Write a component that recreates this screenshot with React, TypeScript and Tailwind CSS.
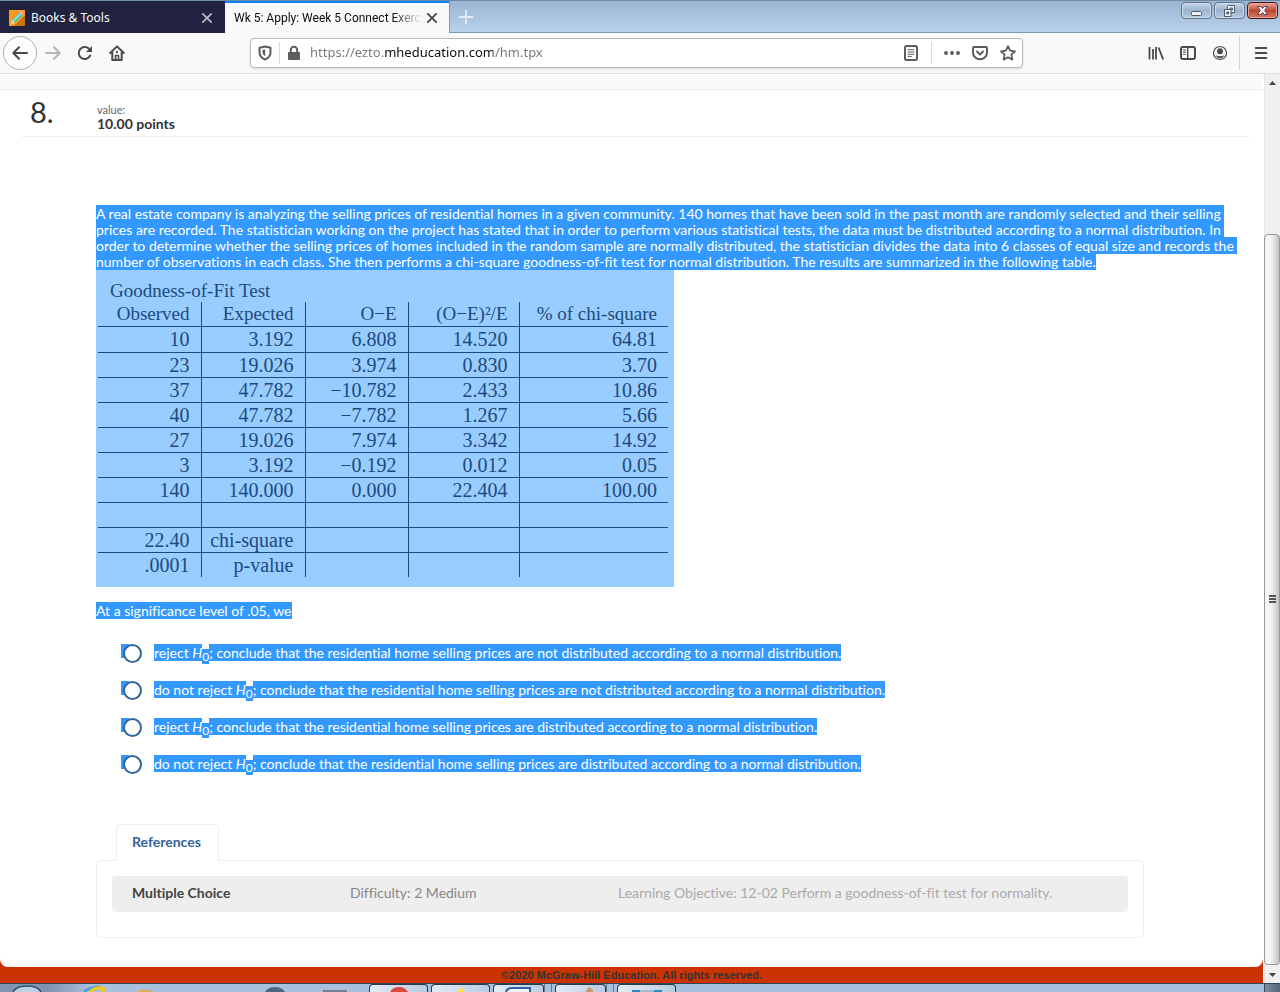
import type { ReactNode } from "react";

const rows: string[][] = [
  ["10", "3.192", "6.808", "14.520", "64.81"],
  ["23", "19.026", "3.974", "0.830", "3.70"],
  ["37", "47.782", "−10.782", "2.433", "10.86"],
  ["40", "47.782", "−7.782", "1.267", "5.66"],
  ["27", "19.026", "7.974", "3.342", "14.92"],
  ["3", "3.192", "−0.192", "0.012", "0.05"],
  ["140", "140.000", "0.000", "22.404", "100.00"],
  ["", "", "", "", ""],
  ["22.40", "chi-square", "", "", ""],
  [".0001", "p-value", "", "", ""],
];

const options = [
  { lead: "reject ", tail: "; conclude that the residential home selling prices are not distributed according to a normal distribution." },
  { lead: "do not reject ", tail: "; conclude that the residential home selling prices are not distributed according to a normal distribution." },
  { lead: "reject ", tail: "; conclude that the residential home selling prices are distributed according to a normal distribution." },
  { lead: "do not reject ", tail: "; conclude that the residential home selling prices are distributed according to a normal distribution." },
];

function Icon({ children, size = 16 }: { children: ReactNode; size?: number }) {
  return (
    <svg width={size} height={size} viewBox="0 0 16 16" fill="none" stroke="currentColor" strokeWidth="2" strokeLinecap="round" strokeLinejoin="round" aria-hidden="true">
      {children}
    </svg>
  );
}

function CloseIcon() {
  return (
    <Icon>
      <path d="M3.8 3.8l8.4 8.4M12.2 3.8l-8.4 8.4" strokeWidth="1.7" />
    </Icon>
  );
}

function TitleBar() {
  return (
    <header className="flex h-[33px] shrink-0 border-t border-b border-t-[#6f8ca5] border-b-[#7f9ab4] bg-gradient-to-b from-[#9bb5d2] to-[#b9d1ea]">
      <div className="-mb-px flex w-[225px] items-center bg-[#20223f] pt-px pr-[10px] pl-[9px] text-[#f9f9fa]">
        <svg width="16" height="16" viewBox="0 0 16 16" aria-hidden="true">
          <rect width="16" height="16" fill="#fb9a1c" />
          <path d="M16 5v11H5z" fill="#c87307" />
          <path d="M3 10l7.5-7.5 3 3L6 13z" fill="#4fc5b0" />
          <path d="M4.2 11.2l7.5-7.5" stroke="#a5eadb" strokeWidth="1.2" />
          <path d="M10.5 2.5l1-1q1-.6 2 .4t.5 2.100l-1 1z" fill="#ec9ad0" />
          <path d="M3 10l3 3-4 1.200z" fill="#f8dca7" />
        </svg>
        <span className="ml-[6px] flex-1 text-[12px]">Books &amp; Tools</span>
        <button type="button" aria-label="Close Books & Tools" className="text-[#b9bac6]">
          <CloseIcon />
        </button>
      </div>
      <div className="-mb-px flex w-[224px] items-center border-t-2 border-[#0a84ff] bg-[#f9f9fa] pr-[9px] pl-[9px] text-[#0c0c0d]">
        <span className="w-[187px] overflow-hidden font-[Roboto,sans-serif] text-[12px] whitespace-nowrap [mask-image:linear-gradient(90deg,#000_158px,transparent_188px)]">
          Wk 5: Apply: Week 5 Connect Exercise
        </span>
        <button type="button" aria-label="Close Wk 5" className="ml-[3px] text-[#3f3f41]">
          <CloseIcon />
        </button>
      </div>
      <button type="button" aria-label="New tab" className="flex w-8 items-center justify-center border-l border-[#7f9ab4] text-[#e4edf6]">
        <Icon>
          <path d="M8 1.500v13M1.500 8h13" strokeWidth="1.800" />
        </Icon>
      </button>
      <div className="flex-1" />
      <div className="mt-px mr-[2px] flex h-[17px] gap-[2px]">
        <button type="button" aria-label="Minimize" className="flex w-[31px] items-center justify-center rounded-sm border border-[#5e738b] bg-gradient-to-b from-[#c3d5e8] via-[#9cb5cf] to-[#b3cbe3] shadow-[inset_0_0_0_1px_#d2e0ee]">
          <svg width="13" height="12" viewBox="0 0 13 12" aria-hidden="true">
            <rect x="1.500" y="6.500" width="10" height="4" rx="1" fill="#f2f2f2" stroke="#4b5a6b" />
          </svg>
        </button>
        <button type="button" aria-label="Restore" className="flex w-[31px] items-center justify-center rounded-sm border border-[#5e738b] bg-gradient-to-b from-[#c3d5e8] via-[#9cb5cf] to-[#b3cbe3] shadow-[inset_0_0_0_1px_#d2e0ee]">
          <svg width="13" height="12" viewBox="0 0 13 12" fill="#f2f2f2" stroke="#4b5a6b" aria-hidden="true">
            <path fillRule="evenodd" d="M4.500 1.500q0-1 1-1h6v7h-7zM7 3v2h2.500V3z" />
            <path fillRule="evenodd" d="M1.500 4.500h6.500v7h-6.500zM3.800 7v2h2V7z" />
          </svg>
        </button>
        <button type="button" aria-label="Close window" className="flex w-[31px] items-center justify-center rounded-sm border border-[#4c1220] bg-gradient-to-b from-[#e9a99d] via-[#bf4630] to-[#d37a61] shadow-[inset_0_0_0_1px_#e5a79a]">
          <svg width="13" height="11" viewBox="0 0 13 11" aria-hidden="true">
            <path d="M1.500 1.500h3.200l1.800 2 1.800-2h3.200L8.700 5.500l2.800 4H8.300l-1.800-2-1.800 2H1.500l2.800-4z" fill="#f5f5f5" stroke="#5a4558" />
          </svg>
        </button>
      </div>
    </header>
  );
}

function Toolbar() {
  return (
    <nav className="flex h-[41px] shrink-0 items-center border-b border-[#dedee0] bg-[#f9f9fa] pl-[3px] text-[#4a4a4b]">
      <button type="button" aria-label="Back" className="flex size-[34px] items-center justify-center rounded-full border border-[#b1b1b3] bg-[#fdfdfd]">
        <Icon>
          <path d="M15 8H1.500M7 2.300L1.300 8 7 13.700" />
        </Icon>
      </button>
      <button type="button" aria-label="Forward" className="ml-2 text-[#b6b6b7]">
        <Icon>
          <path d="M1 8h13.500M9 2.300L14.700 8 9 13.700" />
        </Icon>
      </button>
      <button type="button" aria-label="Reload" className="ml-4">
        <Icon>
          <path d="M13.200 10.500A6 6 0 1 1 12 3.800" />
          <path d="M15 1v6H9z" fill="currentColor" stroke="none" />
        </Icon>
      </button>
      <button type="button" aria-label="Home" className="ml-4">
        <Icon>
          <path d="M1.200 8L8 1.400 14.800 8M3.300 7.500V15h9.400V7.500" />
          <path d="M6.500 15v-4.500h3V15" strokeWidth="1.600" />
          <path d="M8 6.800v.4" />
        </Icon>
      </button>
      <div className="ml-[125px] flex h-[30px] flex-1 items-center rounded-sm border border-[#b9b9bb] bg-white pr-[6px] pl-[6px] text-[#5d5d5e] shadow-sm">
        <Icon>
          <path d="M8 1.500l5.500 1.300v4.400c0 3.600-2 6-5.500 7.300-3.500-1.300-5.500-3.700-5.500-7.300V2.800z" />
          <path d="M8.200 4.500v6.700C6.300 10 5.500 8.700 5.500 7V5z" fill="currentColor" stroke="none" />
        </Icon>
        <span className="mx-[6px] h-[22px] w-px bg-[#d7d7db]" />
        <svg width="16" height="16" viewBox="0 0 16 16" aria-hidden="true">
          <rect x="2" y="7" width="12" height="8" rx="1" fill="currentColor" />
          <path d="M4.800 8V5a3.200 3.200 0 0 1 6.400 0v3" fill="none" stroke="currentColor" strokeWidth="2" />
        </svg>
        <input
          type="text"
          aria-label="Address"
          defaultValue="https://ezto.mheducation.com/hm.tpx"
          className="ml-2 min-w-0 flex-1 bg-[linear-gradient(90deg,#77777a_74px,#0c0c0d_74px,#0c0c0d_183px,#77777a_183px)] bg-clip-text text-[13px] text-transparent outline-none"
        />
        <button type="button" aria-label="Reader view">
          <Icon>
            <rect x="2" y="1" width="12" height="14" rx="1.500" />
            <path d="M5 4.700h6M5 7h6M5 9.200h6M5 11.400h3.500" strokeWidth="1" />
          </Icon>
        </button>
        <span className="mx-3 h-[22px] w-px bg-[#d7d7db]" />
        <div className="flex gap-3">
          <button type="button" aria-label="Page actions">
            <svg width="16" height="16" viewBox="0 0 16 16" fill="currentColor" aria-hidden="true">
              <circle cx="2" cy="8" r="2" />
              <circle cx="8" cy="8" r="2" />
              <circle cx="14" cy="8" r="2" />
            </svg>
          </button>
          <button type="button" aria-label="Save to Pocket">
            <Icon>
              <path d="M2 2h12q1 0 1 1v4.500a7 6.800 0 0 1-14 0V3q0-1 1-1z" />
              <path d="M5 6.500l3 3 3-3" />
            </Icon>
          </button>
          <button type="button" aria-label="Bookmark">
            <Icon>
              <path d="M8 1.200l2.100 4.500 4.900.6-3.600 3.400.9 4.900L8 12.200l-4.300 2.400.9-4.900L1 6.300l4.900-.6z" strokeWidth="1.800" />
            </Icon>
          </button>
        </div>
      </div>
      <div className="ml-[125px] flex gap-4">
        <button type="button" aria-label="Library">
          <Icon>
            <path d="M1.500 2v12.500M5 4v10.500M8 2v12.500M10.500 2.500l4.700 12" strokeWidth="1.800" strokeLinecap="butt" />
          </Icon>
        </button>
        <button type="button" aria-label="Sidebars">
          <Icon>
            <rect x="1" y="2" width="14" height="12" rx="2" />
            <path d="M7.700 2v12" strokeWidth="1.400" />
            <path d="M3.500 5h2M3.500 7.200h2M3.500 9.400h1.500" strokeWidth="1" />
          </Icon>
        </button>
        <button type="button" aria-label="Account">
          <Icon>
            <circle cx="8" cy="8" r="6.500" strokeWidth="1.200" />
            <circle cx="8" cy="6.200" r="3" fill="currentColor" stroke="none" />
            <path d="M3.700 10.200q2 1 4.300 1t4.300-1Q11 13.300 8 13.300t-4.300-3.100z" fill="currentColor" stroke="none" />
          </Icon>
        </button>
      </div>
      <span className="mr-[13px] ml-[11px] h-[34px] w-px bg-[#d7d7db]" />
      <button type="button" aria-label="Menu" className="mr-[11px]">
        <Icon>
          <path d="M2.800 3h10.500M2.800 8h10.500M2.800 13h10.500" />
        </Icon>
      </button>
    </nav>
  );
}

function ResultsTable() {
  return (
    <div className="w-[578px] bg-[#99ccff] pt-2 pb-[10px] pl-[2px] font-['Liberation_Serif',serif] text-[#1c4a80]">
      <table className="w-[570px] table-fixed border-collapse text-right">
        <caption className="pt-px pl-3 text-left text-[19px] leading-[23px]">Goodness-of-Fit Test</caption>
        <colgroup>
          <col className="w-[103px]" />
          <col className="w-[104px]" />
          <col className="w-[103px]" />
          <col className="w-[111px]" />
          <col />
        </colgroup>
        <thead>
          <tr className="h-6 border-b border-[#1c4a80] text-[19px] leading-[23px] whitespace-nowrap [&>th]:p-0 [&>th]:pr-[11px] [&>th]:font-normal [&>th:not(:last-child)]:border-r [&>th:not(:last-child)]:border-[#1c4a80]">
            <th scope="col">Observed</th>
            <th scope="col">Expected</th>
            <th scope="col">O−E</th>
            <th scope="col">(O−E)²/E</th>
            <th scope="col">% of chi-square</th>
          </tr>
        </thead>
        <tbody>
          {rows.map((row, i) => (
            <tr key={i} className="h-[25px] border-[#1c4a80] text-[20px] leading-6 not-last:border-b first:h-[26px]">
              {row.map((cell, j) => (
                <td key={j} className="border-[#1c4a80] p-0 pr-[11px] not-last:border-r">
                  {cell}
                </td>
              ))}
            </tr>
          ))}
        </tbody>
      </table>
    </div>
  );
}

function Question() {
  return (
    <section className="pt-[69px] pr-5 pl-24 text-[14px] leading-4">
      <p className="whitespace-nowrap">
        <span className="bg-[#3399ff] text-white">
          A real estate company is analyzing the selling prices of residential homes in a given community. 140 homes that have been sold in the past month are randomly selected and their selling&nbsp;<br />
          prices are recorded. The statistician working on the project has stated that in order to perform various statistical tests, the data must be distributed according to a normal distribution. In&nbsp;<br />
          order to determine whether the selling prices of homes included in the random sample are normally distributed, the statistician divides the data into 6 classes of equal size and records the&nbsp;<br />
          number of observations in each class. She then performs a chi-square goodness-of-fit test for normal distribution. The results are summarized in the following table.
        </span>
      </p>
      <ResultsTable />
      <p className="mt-4">
        <span className="bg-[#3399ff] text-white">At a significance level of .05, we</span>
      </p>
      <div role="radiogroup" aria-label="Answer" className="mt-6 flex flex-col gap-[17px] pl-[25px]">
        {options.map((o, i) => (
          <label key={i} className="flex h-5 items-center">
            <span className="relative flex pl-[2px]">
              <span className="absolute top-0 left-0 h-[14px] w-2 bg-[#3399ff]" />
              <input type="radio" name="answer" className="relative size-[19px] appearance-none rounded-full border-2 border-[#336699] bg-white checked:bg-[#336699]" />
            </span>
            <span className="ml-3 whitespace-nowrap text-white">
              <span className="bg-[#3399ff]">{o.lead}<i>H</i></span>
              <sub className="bg-[#3399ff] text-[12px]">0</sub>
              <span className="bg-[#3399ff]">{o.tail}</span>
            </span>
          </label>
        ))}
      </div>
    </section>
  );
}

function References() {
  return (
    <section className="mt-[50px] mr-[119px] ml-24 text-[14px]">
      <button type="button" className="relative -mb-px ml-5 h-[37px] rounded-t border border-b-0 border-[#eeeeee] bg-white pr-[17px] pb-[3px] pl-[15px] font-bold text-[#336699]">
        References
      </button>
      <div className="rounded border border-[#eeeeee] px-[15px] pt-[15px] pb-[25px]">
        <div className="flex h-9 items-center rounded bg-[#eeeeee] pb-[3px] pl-5">
          <span className="w-[218px] font-bold text-[#444444]">Multiple Choice</span>
          <span className="w-[268px] text-[#888888]">Difficulty: 2 Medium</span>
          <span className="text-[#aaaaaa]">Learning Objective: 12-02 Perform a goodness-of-fit test for normality.</span>
        </div>
      </div>
    </section>
  );
}

function ScrollBar() {
  return (
    <div className="flex w-4 shrink-0 flex-col border-l border-[#e3e3e3] bg-[#f0f0f0]">
      <svg width="15" height="17" viewBox="0 0 15 17" className="shrink-0" aria-hidden="true">
        <path d="M4 11l3.500-4 3.500 4z" fill="#444" />
      </svg>
      <div className="flex-[143]" />
      <div className="-ml-px flex flex-[731] flex-col items-center justify-center gap-px rounded-sm border border-[#979797] bg-gradient-to-r from-[#f5f5f5] from-40% to-[#c3c3c6]">
        <span className="h-[2px] w-[7px] bg-[#555]" />
        <span className="h-[2px] w-[7px] bg-[#555]" />
        <span className="h-[2px] w-[7px] bg-[#555]" />
      </div>
      <svg width="15" height="18" viewBox="0 0 15 18" className="shrink-0" aria-hidden="true">
        <path d="M4 8h7l-3.500 4z" fill="#444" />
      </svg>
    </div>
  );
}

function TaskButton({ label, wide, children }: { label: string; wide?: boolean; children: ReactNode }) {
  return (
    <button
      type="button"
      aria-label={label}
      className={
        (wide ? "w-[59px]" : "w-[51px]") +
        " flex justify-center rounded-t border border-b-0 border-[#26394d] bg-gradient-to-r from-[#e3ebf5] to-[#b9cce2]"
      }
    >
      <svg width="30" height="7" viewBox="0 0 30 7" aria-hidden="true">{children}</svg>
    </button>
  );
}

function TaskBar() {
  return (
    <footer className="flex h-[9px] shrink-0 items-stretch overflow-hidden border-t border-[#33475c] bg-[linear-gradient(90deg,#8195b0_50px,#a7c0de_90px)]">
      <svg width="369" height="8" viewBox="0 0 369 8" className="shrink-0" aria-hidden="true">
        <path d="M13 8q3-6 14-6t14 6" fill="#bdd0e2" stroke="#235078" strokeWidth="1.500" />
        <path d="M84 8q6-5 16-5" fill="none" stroke="#4ba3d6" strokeWidth="3" />
        <path d="M90 8q5-5 11-4t1 4" fill="none" stroke="#f5c817" strokeWidth="3" />
        <rect x="138" y="6" width="13" height="2" fill="#d6ae64" />
        <path d="M265 8q3-5 10-5t10 5z" fill="#50657f" />
        <rect x="323" y="6" width="24" height="2" fill="#74808f" />
      </svg>
      <TaskButton label="Chrome" wide>
        <path d="M6 7q3-5 9-5t9 5z" fill="#dc4a3f" />
      </TaskButton>
      <span className="w-[3px]" />
      <TaskButton label="Notes" wide>
        <path d="M11 7l4-5 3 5z" fill="#fbe83a" />
      </TaskButton>
      <span className="w-[3px]" />
      <TaskButton label="Word">
        <path d="M2 7q1-4 6-4h18v4" fill="#f1f5fb" stroke="#2d5fa7" strokeWidth="2" />
      </TaskButton>
      <span className="mr-[3px] w-2 border-x border-[#61788f]" />
      <TaskButton label="Paint">
        <path d="M19 7l4-5 4 3v2z" fill="#c99a6d" />
      </TaskButton>
      <span className="mr-[3px] w-2 border-x border-[#61788f]" />
      <TaskButton label="Diagram" wide>
        <path d="M0 5h8v2H0zM22 5h8v2h-8z" fill="#2f89bd" />
        <path d="M8 6h14" stroke="#8097ac" />
      </TaskButton>
      <span className="flex-1" />
      <span className="w-4 border-l border-[#33475c] bg-gradient-to-r from-[#7c8a9b] to-[#56677a]" />
    </footer>
  );
}

export default function App() {
  return (
    <div className="flex min-h-screen flex-col bg-white font-['Noto_Sans',sans-serif]">
      <TitleBar />
      <Toolbar />
      <div className="flex flex-1">
        <div className="mr-px flex min-w-0 flex-1 flex-col bg-[#cc3300] font-[Lato,sans-serif] [font-variant-ligatures:none]">
          <main className="flex-1 rounded-b-lg bg-white">
            <div className="h-4 border-b border-[#eeeeee] bg-[#fafafa]" />
            <div className="mr-[14px] ml-[22px] flex h-[47px] border-b border-[#eeeeee] pl-2 text-[#333333]">
              <h1 className="w-[67px] pt-[6px] text-[29px] leading-8">8.</h1>
              <div className="pt-[13px]">
                <div className="text-[11px] leading-[13px] text-[#666666]">value:</div>
                <div className="text-[14px] leading-4 font-bold">10.00 points</div>
              </div>
            </div>
            <Question />
            <References />
          </main>
          <div className="h-4 text-center font-['Liberation_Sans',sans-serif] text-[11px] leading-4 font-bold text-[#333333]">
            ©2020 McGraw-Hill Education. All rights reserved.
          </div>
        </div>
        <ScrollBar />
      </div>
      <TaskBar />
    </div>
  );
}
